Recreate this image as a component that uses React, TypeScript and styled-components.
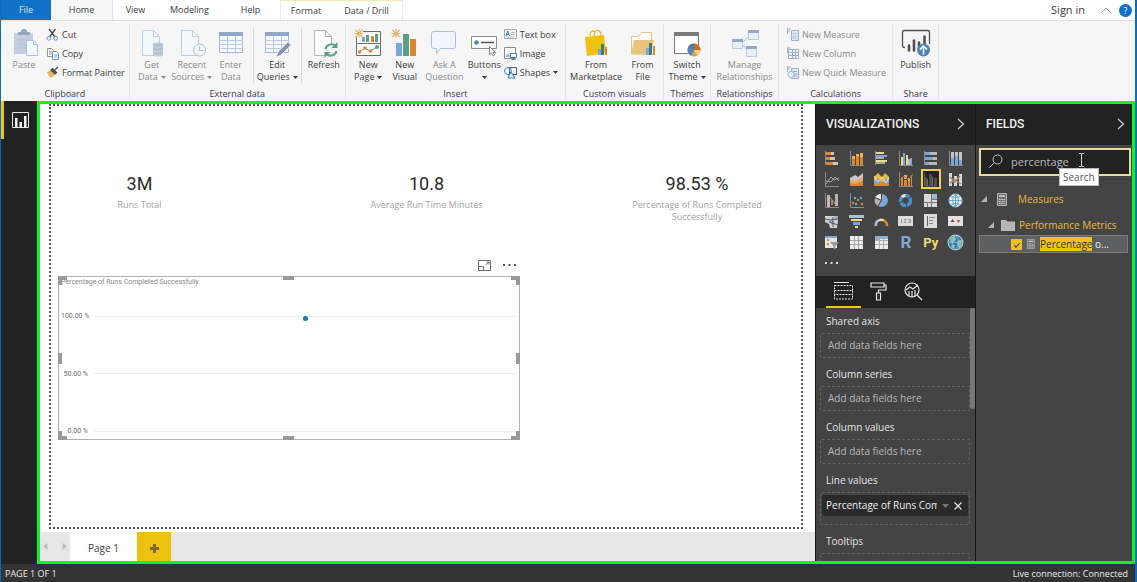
import React from "react";
import styled, { createGlobalStyle, css } from "styled-components";

const c = {
  blue: "#0a6cbd",
  dark: "#222222",
  pane: "#444444",
  yellow: "#efc319",
  orange: "#d9882f",
  sky: "#7ba7d7",
  cream: "#f0d98a",
  light: "#e4e4e4",
  grey: "#9a9a9a",
  green: "#00fb20",
};

const Global = createGlobalStyle`
  *, *::before, *::after { box-sizing: border-box; }
  body { margin: 0; font-family: "Open Sans", "Noto Sans", sans-serif; font-size: 9px; color: #3c3c3c; }
  button, input { font: inherit; color: inherit; margin: 0; padding: 0; border: 0; background: none; }
  svg { display: block; flex: none; }
  ul { list-style: none; margin: 0; padding: 0; }
  h2, p { margin: 0; font-weight: 400; }
`;

const Shell = styled.div`
  display: flex;
  flex-direction: column;
  height: 100vh;
  border-left: 1px solid ${c.blue};
  border-right: 2px solid ${c.blue};
  overflow: hidden;
  background: #fff;
`;

/* ---------- ribbon ---------- */

const TabBar = styled.nav`
  display: flex;
  flex: none;
  height: 20px;
  background: #fff;
`;

const Tab = styled.button<{ $w: number; $kind?: "file" | "active" | "context" }>`
  width: ${(p) => p.$w}px;
  line-height: 20px;
  text-align: center;
  ${(p) => p.$kind === "file" && css`background: #1272c8; color: #d3e6f7;`}
  ${(p) => p.$kind === "active" && css`background: #f6f6f6; border-right: 1px solid #e2e2e2;`}
`;

const ContextTabs = styled.div`
  display: flex;
  line-height: 18px;
  border: 1px solid #ececec;
  border-bottom: 0;
  border-top: 1px solid #f1ecb0;
  button { line-height: 18px; }
`;

const Account = styled.div`
  display: flex;
  align-items: center;
  gap: 16px;
  margin-left: auto;
  padding-right: 3px;
`;

const SignIn = styled.button`
  font-size: 11px;
  line-height: 20px;
`;

const AccountIcons = styled.div`
  display: flex;
  align-items: center;
  gap: 8px;
`;

const HelpButton = styled.button`
  width: 13px;
  height: 13px;
  border-radius: 50%;
  background: #0f6fc6;
  color: #fff;
  font-size: 9px;
  line-height: 13px;
  text-align: center;
`;

const Ribbon = styled.div`
  display: flex;
  flex: none;
  height: 81px;
  background: #f6f6f6;
  border-top: 1px solid #e2e2e2;
`;

const Group = styled.section`
  display: flex;
  flex-direction: column;
  justify-content: space-between;
  border-right: 1px solid #e6e6e6;
  margin: 3px 0 1px;
  padding: 0 2px;
`;

const GroupItems = styled.div`
  display: flex;
  padding-top: 1px;
`;

const GroupLabel = styled.h2`
  font-size: 9px;
  line-height: 12px;
  text-align: center;
`;

const Big = styled.button<{ $w: number; $off?: boolean }>`
  display: flex;
  flex-direction: column;
  align-items: center;
  width: ${(p) => p.$w}px;
  padding-top: 3px;
  line-height: 12px;
  white-space: nowrap;
  color: ${(p) => (p.$off ? "#8b8b8b" : "#3c3c3c")};
  svg.pic { margin-bottom: 1px; }
`;

const Line = styled.span`
  display: flex;
  align-items: center;
  gap: 3px;
  height: 12px;
`;

const Small = styled.button<{ $off?: boolean }>`
  display: flex;
  align-items: center;
  gap: 3px;
  height: 19px;
  white-space: nowrap;
  color: ${(p) => (p.$off ? "#8b8b8b" : "#3c3c3c")};
`;

const SmallColumn = styled.div<{ $pad?: string }>`
  display: flex;
  flex-direction: column;
  padding: ${(p) => p.$pad || "0 5px 0 4px"};
`;

const Rule = styled.i`
  width: 1px;
  margin: 2px 3px 0;
  background: #dadada;
`;

const Caret = () => (
  <svg width="5" height="3" viewBox="0 0 5 3"><path d="M0 0h5L2.500 3z" fill="currentColor" /></svg>
);

const Pic = ({ children }: { children: React.ReactNode }) => (
  <svg className="pic" width="30" height="30" viewBox="0 0 30 30" fill="none">{children}</svg>
);

type BigProps = { w: number; off?: boolean; lines: string[]; caret?: boolean; children: React.ReactNode };
const BigButton = ({ w, off, lines, caret, children }: BigProps) => (
  <Big $w={w} $off={off}>
    <Pic>{children}</Pic>
    {lines.map((l, i) => (
      <Line key={i}>{l}{caret && i === lines.length - 1 && <Caret />}</Line>
    ))}
  </Big>
);

const S = ({ children }: { children: React.ReactNode }) => (
  <svg width="13" height="13" viewBox="0 0 13 13" fill="none">{children}</svg>
);

const Doc = () => <path d="M7.500 2.500h11l6 6v19h-17zM18.500 2.500v6h6" fill="#f3f8fd" stroke="#bccfe4" />;
const Spark = () => <path d="M6 1v9M1.500 5.500h9M2.500 2l7 7M9.500 2l-7 7" stroke="#eab065" strokeWidth="1.100" />;
const GridPic = () => (
  <>
    <path d="M3.500 4.500h23v20h-23z" fill="#f5f9fd" stroke="#a3b6d0" />
    <path d="M3 4h24v4H3z" fill="#92a7c6" />
    <path d="M3 12.500h24M3 16.500h24M3 20.500h24M11.500 8v16M19.500 8v16" stroke="#bccbe0" />
  </>
);

const RibbonBar = () => (
  <Ribbon>
    <Group>
      <GroupItems>
        <BigButton w={42} off lines={["Paste"]}>
          <path d="M5 5h19v21H5z" fill="#c5cede" />
          <path d="M9 7V4h3a3 3 0 0 1 6 0h3v3z" fill="#93a6bd" />
          <path d="M8 12h12M8 16h9M8 20h9" stroke="#b3bfd2" />
          <path d="M17.500 12.500h7l4 4v11h-11zM24.500 12.500v4h4" fill="#f4f9fe" stroke="#a9c2df" />
        </BigButton>
        <SmallColumn $pad="0 2px 0 1px">
          <Small>
            <S>
              <path d="M3 1l6 8M9.500 1l-6 8" stroke="#4a4a4a" strokeWidth="1.300" />
              <circle cx="2.800" cy="10.300" r="1.900" stroke="#5c93c8" /><circle cx="9.600" cy="10.300" r="1.900" stroke="#5c93c8" />
            </S>
            Cut
          </Small>
          <Small>
            <S>
              <path d="M1.500 1.500h4l2 2v6h-6z" fill="#fff" stroke="#8794a5" /><path d="M3 5h3M3 7h3" stroke="#8794a5" />
              <path d="M6.500 4.500h4l2 2v6h-6z" fill="#fff" stroke="#8794a5" /><path d="M8 8h3M8 10h3" stroke="#6f9fcf" />
            </S>
            Copy
          </Small>
          <Small>
            <S>
              <path d="M1 6l4-2 4 4-3 4c-1 0-5-4-5-6z" fill="#e8b65c" />
              <path d="M5 4l4 4 1.500-1.500-4-4zM9 4l3-3" stroke="#505050" fill="#505050" strokeWidth="1.200" />
            </S>
            Format Painter
          </Small>
        </SmallColumn>
      </GroupItems>
      <GroupLabel>Clipboard</GroupLabel>
    </Group>

    <Group>
      <GroupItems>
        <BigButton w={40} off lines={["Get", "Data"]} caret>
          <g transform="translate(-2 0)"><Doc />
            <path d="M18 16c0-2 10-2 10 0v11c0 2-10 2-10 0z" fill="#c0cbdc" />
            <path d="M18 16c0 2 10 2 10 0M18 20c0 2 10 2 10 0M18 24c0 2 10 2 10 0" stroke="#a5b4ca" />
          </g>
        </BigButton>
        <BigButton w={40} off lines={["Recent", "Sources"]} caret>
          <g transform="translate(-3 0)"><Doc /></g>
          <circle cx="22.500" cy="22" r="6" fill="#f3f8fd" stroke="#a9bdd8" />
          <path d="M22.500 18v4.500h4" stroke="#a9bdd8" />
        </BigButton>
        <BigButton w={38} off lines={["Enter", "Data"]}><GridPic /></BigButton>
        <Rule />
        <BigButton w={41} lines={["Edit", "Queries"]} caret>
          <GridPic />
          <path d="M14 29l2-5L26 14l3 3-10 10z" fill="#8793a8" stroke="#f6f6f6" strokeWidth="0.600" />
        </BigButton>
        <Rule />
        <BigButton w={38} lines={["Refresh"]}>
          <g transform="translate(-2 0)"><path d="M7.500 2.500h11l6 6v19h-17zM18.500 2.500v6h6" fill="#fff" stroke="#b5b5b5" /></g>
          <circle cx="22" cy="22" r="7.500" fill="#f6f6f6" />
          <path d="M16.500 21a6 6 0 0 1 10-3M27.500 23a6 6 0 0 1-10 3" stroke="#57a184" strokeWidth="2" />
          <path d="M28.500 14v6h-6zM15.500 30v-6h6z" fill="#57a184" />
        </BigButton>
      </GroupItems>
      <GroupLabel>External data</GroupLabel>
    </Group>

    <Group>
      <GroupItems>
        <BigButton w={41} lines={["New", "Page"]} caret>
          <path d="M3.500 3.500h24v24h-24zM3 15.500h24" fill="#fff" stroke="#6b6b6b" />
          <path d="M9 9h3v5H9z" fill="#7ba7d7" /><path d="M13 7h3v7h-3z" fill="#57a184" /><path d="M18 8h3v6h-3z" fill="#d9882f" /><path d="M22 6h3v8h-3z" fill="#57a184" />
          <path d="M6 24l6-4 5 3 7-4" stroke="#8a8a8a" />
          <circle cx="6.500" cy="24" r="1.800" fill="#d9882f" /><circle cx="12" cy="20" r="1.800" fill="#d9882f" /><circle cx="17.500" cy="23" r="1.800" fill="#d9882f" /><circle cx="24" cy="19" r="2" fill="#57a184" />
          <path d="M0 0h10v9H0z" fill="#f6f6f6" /><Spark />
        </BigButton>
        <BigButton w={32} lines={["New", "Visual"]}>
          <path d="M6 15h6v13H6z" fill="#7ba7d7" /><path d="M13 6h6v22h-6z" fill="#57a184" /><path d="M20 11h6v17h-6z" fill="#d9882f" /><Spark />
        </BigButton>
        <BigButton w={47} off lines={["Ask A", "Question"]}>
          <path d="M2.500 5.500q0-2 2-2h20q2 0 2 2v13q0 2-2 2h-13l-4 5v-5h-3q-2 0-2-2z" fill="#f1f6fd" stroke="#a9bfe0" />
        </BigButton>
        <Big $w={33}>
          <Pic>
            <path d="M2.500 8.500h25v12h-25z" fill="#fff" stroke="#909090" />
            <circle cx="7.500" cy="14.500" r="2.300" fill="#4a86c4" /><path d="M12 14.500h13" stroke="#505050" strokeWidth="1.500" />
            <path d="M20.500 18.500v8l2-1.500 1.500 3 1.500-1-1.500-2.500h2.500z" fill="#fff" stroke="#777" strokeWidth="0.800" />
          </Pic>
          <Line>Buttons</Line>
          <Line><Caret /></Line>
        </Big>
        <SmallColumn $pad="0 5px 0 3px">
          <Small>
            <S><path d="M0.500 1.500h12v9h-12z" fill="#fff" stroke="#a9a9a9" /><path d="M2 8l1.700-5L5.500 8M2.500 6.500h2.500" stroke="#2d77c0" /><path d="M7 4.500h4M7 6.500h4M2 9h9" stroke="#b5b5b5" /></S>
            Text box
          </Small>
          <Small>
            <S><path d="M0.500 0.500h11v11h-11z" fill="#fff" stroke="#8a8a8a" /><path d="M1 10l3-4 3 4z" fill="#9cb6d2" /><path d="M6.500 6.500h6v4h-6z" fill="#fff" stroke="#3b7fc0" /><path d="M9.500 10v2.500M7.500 12.500h4" stroke="#3b7fc0" /></S>
            Image
          </Small>
          <Small>
            <S><circle cx="4" cy="5" r="3.500" stroke="#3b7fc0" /><path d="M5.500 1.500h7v7h-7z" stroke="#2f67a3" /><path d="M4 12l3-6 4 6z" fill="#dceaf7" stroke="#3b7fc0" /></S>
            Shapes<Caret />
          </Small>
        </SmallColumn>
      </GroupItems>
      <GroupLabel>Insert</GroupLabel>
    </Group>

    <Group>
      <GroupItems>
        <BigButton w={56} lines={["From", "Marketplace"]}>
          <path d="M9 8c0-6 4-6 5-3M13 8c0-8 7-7 7 0" stroke="#e3b72c" strokeWidth="1.200" />
          <path d="M4 9l19-2 2 18-19 3z" fill="#f0c10f" />
          <path d="M17 21h3v6h-3z" fill="#7ba7d7" /><path d="M20 16h3v11h-3z" fill="#3f7f7b" /><path d="M24 19h2v8h-2z" fill="#d9882f" />
        </BigButton>
        <BigButton w={37} lines={["From", "File"]}>
          <path d="M3.500 26V8.500h7l3-4h10v22z" fill="#fff" stroke="#e0c48b" />
          <path d="M6 12h20l-3 14H3z" fill="#e8c57c" />
          <path d="M18 20h3v7h-3z" fill="#7ba7d7" /><path d="M21 15h3v12h-3z" fill="#3f7f7b" /><path d="M25 18h2v9h-2z" fill="#d9882f" />
        </BigButton>
      </GroupItems>
      <GroupLabel>Custom visuals</GroupLabel>
    </Group>

    <Group>
      <GroupItems>
        <BigButton w={42} lines={["Switch", "Theme"]} caret>
          <path d="M2.500 4.500h24v21h-24z" fill="#fff" stroke="#7a7a7a" /><path d="M2 4h25v4H2z" fill="#7a7a7a" />
          <circle cx="22" cy="22" r="6.500" fill="#e2a04c" /><path d="M22 22V15.500A6.500 6.500 0 0 1 28.500 22z" fill="#c96f24" />
          <path d="M22 22h6.500a6.500 6.500 0 0 1-3 5.500z" fill="#f0cd92" /><path d="M22 22l-5.600-3.400A6.500 6.500 0 0 0 19 27.700z" fill="#4a86c4" /><path d="M22 22V15.500a6.500 6.500 0 0 0-5.600 3.100z" fill="#4e7d9c" />
        </BigButton>
      </GroupItems>
      <GroupLabel>Themes</GroupLabel>
    </Group>

    <Group>
      <GroupItems>
        <BigButton w={63} off lines={["Manage", "Relationships"]}>
          <path d="M12 15l7-7M12 16l5 6" stroke="#a9bfe0" />
          <path d="M18.500 2.500h10v9h-10zM2.500 11.500h10v9h-10zM16.500 18.500h10v10h-10z" fill="#e6effa" stroke="#b7cae4" />
          <path d="M18 2h11v3H18zM2 11h11v3H2zM16 18h11v3H16z" fill="#93a9cb" />
        </BigButton>
      </GroupItems>
      <GroupLabel>Relationships</GroupLabel>
    </Group>

    <Group>
      <GroupItems>
        <SmallColumn $pad="0 4px 0 5px">
          {["New Measure", "New Column", "New Quick Measure"].map((t, i) => (
            <Small key={t} $off>
              <S>
                <path d="M1 1h4M1 3h3M1.500 0v6" stroke="#a9b3c0" />
                {i === 1
                  ? <><path d="M2.500 2.500h10v9h-10z" fill="#eef4fb" stroke="#9fb2cc" /><path d="M2 5.500h11M6.500 3v9M9.500 3v9M2 8.500h11" stroke="#9fb2cc" /></>
                  : <><path d="M5.500 2.500h7v10h-7z" fill="#dde8f5" stroke="#9fb2cc" /><path d="M7 5.500h4M7 8h4M7 10h4" stroke="#8ea5c5" strokeDasharray={i ? "none" : "1 1"} />{i === 2 && <circle cx="5" cy="8.500" r="3" fill="#eef4fb" stroke="#9fb2cc" />}</>}
              </S>
              {t}
            </Small>
          ))}
        </SmallColumn>
      </GroupItems>
      <GroupLabel>Calculations</GroupLabel>
    </Group>

    <Group>
      <GroupItems>
        <BigButton w={41} lines={["Publish"]}>
          <path d="M4 19.500h-.5q-2 0-2-2V4.500q0-2 2-2h23q2 0 2 2V16" stroke="#505050" strokeWidth="1.300" />
          <path d="M8 17.500v5M13 12.500v10M18 14.500v4M23.500 8.500v7" stroke="#505050" strokeWidth="2.600" strokeLinecap="round" />
          <circle cx="22.500" cy="22" r="6.500" fill="#4a83b8" /><path d="M22.500 26.500v-8M19 21.500l3.500-3.500 3.500 3.500" stroke="#fff" strokeWidth="1.600" />
        </BigButton>
      </GroupItems>
      <GroupLabel>Share</GroupLabel>
    </Group>
  </Ribbon>
);

/* ---------- workspace ---------- */

const Workspace = styled.div`
  display: flex;
  flex: 1;
  min-height: 0;
`;

const Rail = styled.aside`
  width: 36px;
  background: ${c.dark};
`;

const RailButton = styled.button`
  display: flex;
  align-items: center;
  justify-content: center;
  width: 100%;
  height: 38px;
  border-left: 3px solid ${c.yellow};
`;

const Frame = styled.main`
  display: flex;
  flex: 1;
  min-width: 0;
  border: 3px solid ${c.green};
`;

const Report = styled.section`
  display: flex;
  flex-direction: column;
  flex: 1;
  min-width: 0;
`;

const Page = styled.div`
  flex: 1;
  min-height: 0;
  margin: 0 12px 3px 9px;
  border: 2px dotted #555;
`;

const Kpis = styled.div`
  display: grid;
  grid-template-columns: 177fr 397fr 144fr;
  padding: 67px 32px 0 0;
  min-height: 150px;
  text-align: center;
`;

const KpiValue = styled.p`
  font-family: Roboto, "Liberation Sans", sans-serif;
  font-size: 18px;
  line-height: 22px;
  color: #2b2b2b;
`;

const KpiLabel = styled.p`
  margin-top: 4px;
  line-height: 12px;
  color: #a3a3a3;
`;

const ChartArea = styled.div`
  width: 62.5%;
  padding-left: 7px;
`;

const ChartTools = styled.div`
  display: flex;
  justify-content: flex-end;
  align-items: center;
  gap: 12px;
  height: 20px;
  padding: 0 4px 2px 0;
`;

const Chart = styled.figure`
  position: relative;
  display: flex;
  flex-direction: column;
  height: 164px;
  margin: 0;
  padding: 0 2px 3px;
  border: 1px solid #b0b0b0;
  font-family: Roboto, "Liberation Sans", sans-serif;
  font-size: 7px;
`;

const ChartTitle = styled.figcaption`
  line-height: 10px;
  color: #8b8b8b;
`;

const Plot = styled.div`
  position: relative;
  display: flex;
  flex: 1;
  flex-direction: column;
  justify-content: space-between;
  padding-top: 24px;
`;

const Tick = styled.div`
  display: flex;
  align-items: center;
  gap: 6px;
  height: 10px;
  color: #6b6b6b;
  span { width: 27px; text-align: right; white-space: nowrap; }
  &::after { content: ""; flex: 1; height: 1px; background: #ececec; }
`;

const Point = styled.i`
  position: absolute;
  top: 29px;
  left: 53%;
  width: 5px;
  height: 5px;
  border-radius: 50%;
  background: #1b78ba;
`;

const Handle = styled.i<{ $at: string }>`
  position: absolute;
  background: #999;
  ${(p) => p.$at.includes("t") && css`top: -1px;`}
  ${(p) => p.$at.includes("b") && css`bottom: -1px;`}
  ${(p) => p.$at.includes("l") && css`left: -1px;`}
  ${(p) => p.$at.includes("r") && css`right: -1px;`}
  ${(p) => p.$at.length === 2 && css`
    width: 9px;
    height: 9px;
    background: none;
    border: 0 solid #999;
    border-${p.$at[0] === "t" ? "top" : "bottom"}-width: 4px;
    border-${p.$at[1] === "l" ? "left" : "right"}-width: 4px;
  `}
  ${(p) => "tb".includes(p.$at) && css`left: 50%; width: 11px; height: 4px; margin-left: -6px;`}
  ${(p) => "lr".includes(p.$at) && css`top: 50%; width: 4px; height: 11px; margin-top: -5px;`}
`;

const PageTabs = styled.div`
  display: flex;
  flex: none;
  height: 29px;
  background: #e7e7e7;
`;

const PageArrows = styled.div`
  display: flex;
  align-items: center;
  justify-content: space-between;
  width: 30px;
  padding: 0 3px;
`;

const PageTab = styled.button`
  width: 67px;
  padding-top: 2px;
  background: #fff;
  font-size: 10px;
`;

const AddPage = styled.button`
  display: flex;
  align-items: center;
  justify-content: center;
  width: 34px;
  padding-top: 4px;
  background: #ecc110;
`;

/* ---------- panes ---------- */

const Pane = styled.aside<{ $w: number }>`
  display: flex;
  flex-direction: column;
  flex: none;
  width: ${(p) => p.$w}px;
  border-left: 1px solid #151515;
  background: ${c.pane};
  color: ${c.light};
  font-size: 10px;
`;

const PaneHead = styled.header<{ $end: number }>`
  display: flex;
  flex: none;
  align-items: center;
  justify-content: space-between;
  height: 41px;
  padding: 0 ${(p) => p.$end}px 2px 10px;
  background: ${c.dark};
  h2 { font: 500 12px Roboto, "Liberation Sans", sans-serif; color: #f2f2f2; }
`;

const Gallery = styled.div`
  display: grid;
  grid-template-columns: repeat(6, 1fr);
  grid-auto-rows: 21px;
  flex: none;
  height: 131px;
  padding: 3px 7px 0 3px;
`;

const VizButton = styled.button<{ $on?: boolean }>`
  display: flex;
  align-items: center;
  justify-content: center;
  justify-self: center;
  width: 20px;
  height: 20px;
  ${(p) => p.$on && css`background: ${c.dark}; border: 2px solid #f2d24c;`}
`;

const PaneTabs = styled.div`
  display: flex;
  flex: none;
  height: 32px;
  padding: 0 10px;
  background: ${c.dark};
`;

const PaneTab = styled.button<{ $on?: boolean }>`
  display: flex;
  align-items: center;
  justify-content: center;
  width: 35px;
  border-bottom: 2px solid ${(p) => (p.$on ? c.yellow : "transparent")};
`;

const Wells = styled.div`
  display: flex;
  flex: 1;
  min-height: 0;
  overflow: hidden;
`;

const WellList = styled.div`
  flex: 1;
  min-width: 0;
  padding: 5px 0 0 4px;
`;

const Track = styled.i`
  width: 5px;
  height: 101px;
  border-radius: 2px;
  background: #777;
`;

const WellName = styled.h2`
  padding-left: 6px;
  font-size: 10px;
  line-height: 16px;
`;

const Well = styled.div<{ $filled?: boolean }>`
  margin: 4px 0 8px;
  min-height: ${(p) => (p.$filled ? 33 : 25)}px;
  padding: ${(p) => (p.$filled ? "2px 1px" : "0 7px")};
  border: 1px dashed #646464;
  border-radius: 2px;
  line-height: 23px;
  color: #b8b8b8;
`;

const Chip = styled.div`
  display: flex;
  align-items: center;
  gap: 5px;
  height: 21px;
  padding: 0 6px 0 4px;
  border-radius: 2px;
  background: #2a2a2a;
  color: #efefef;
  span { flex: 1; overflow: hidden; white-space: nowrap; }
`;

const SearchBox = styled.div`
  position: relative;
  display: flex;
  align-items: center;
  gap: 8px;
  height: 28px;
  margin: 3px 1px 3px 3px;
  padding: 0 8px 2px;
  border: 2px solid #e9dca0;
  background: ${c.dark};
  input { flex: 1; min-width: 0; outline: 0; font-size: 11px; color: #b9b9b9; }
`;

const Tip = styled.span`
  position: absolute;
  top: 18px;
  left: 78px;
  padding: 0 3px;
  border: 1px solid #bbb;
  background: #fff;
  color: #555;
  font-size: 10px;
  line-height: 16px;
`;

const Pointer = styled.svg`
  position: absolute;
  top: 3px;
  left: 97px;
`;

const Tree = styled.ul`
  flex: 1;
  border-top: 1px solid #3a3a3a;
  padding: 3px 4px 0 3px;
`;

const Node = styled.li<{ $depth: number }>`
  display: flex;
  align-items: center;
  height: ${(p) => (p.$depth ? 20 : 32)}px;
  padding-left: ${(p) => 2 + p.$depth * 7}px;
  color: #edb935;
`;

const NodeIcon = styled.span<{ $left: number; $right: number }>`
  margin: 0 ${(p) => p.$right}px 0 ${(p) => p.$left}px;
`;

const FieldRow = styled.label`
  display: flex;
  align-items: center;
  gap: 5px;
  height: 18px;
  padding-left: 31px;
  border: 1px solid #7b7b7b;
  background: #5d5f60;
  color: #f2f2f2;
  white-space: nowrap;
  input {
    display: flex;
    align-items: center;
    justify-content: center;
    appearance: none;
    width: 11px;
    height: 11px;
    background: ${c.yellow};
  }
  input::after {
    content: "";
    width: 6px;
    height: 3px;
    border-left: 1px solid #333;
    border-bottom: 1px solid #333;
    transform: rotate(-45deg);
  }
  mark { background: #efc40c; color: #333; }
`;

const Status = styled.footer`
  display: flex;
  flex: none;
  align-items: center;
  justify-content: space-between;
  height: 18px;
  padding: 0 7px 0 4px;
  background: #333;
  color: #ececec;
`;

const Chevron = () => <svg width="8" height="12" viewBox="0 0 8 12"><path d="M1 1l5.500 5L1 11" fill="none" stroke="#d0d0d0" strokeWidth="1.200" /></svg>;
const Expander = () => <svg width="6" height="6" viewBox="0 0 6 6"><path d="M6 0v6H0z" fill="#b5b5b5" /></svg>;
const Calc = ({ w, h }: { w: number; h: number }) => (
  <svg width={w} height={h} viewBox="0 0 10 13"><path d="M0.500 0.500h9v12h-9z" fill="#6f6f6f" stroke="#b5b5b5" /><path d="M2 3h6" stroke="#d5d5d5" strokeWidth="1.500" /><path d="M2 6.500h6M2 8.500h6M2 10.500h6" stroke="#d5d5d5" strokeDasharray="1.500 .7" /></svg>
);

const F = ({ d, f }: { d: string; f: string }) => <path d={d} fill={f} />;
const L = ({ d, s, w = 1 }: { d: string; s: string; w?: number }) => <path d={d} stroke={s} strokeWidth={w} fill="none" />;
const Axis = () => <L d="M1.500 0v14.500H15" s="#8c8c8c" />;
const World = ({ fill }: { fill: string }) => <circle cx="7.500" cy="7.500" r="6.500" fill={fill} stroke="#a9cbe4" />;

const visuals: [string, React.ReactNode][] = [
  ["Stacked bar chart", <><L d="M1.500 0v14" s="#8c8c8c" /><F d="M2 1h5v3H2zM2 6h4v3H2zM2 11h7v3H2z" f={c.orange} /><F d="M7 1h3v3H7zM6 6h5v3H6zM9 11h5v3H9z" f="#d5c3ab" /></>],
  ["Stacked column chart", <><Axis /><F d="M3 8h3v6H3zM7 5h3v9H7zM11 6h3v8h-3z" f={c.orange} /><F d="M3 5h3v3H3zM11 2h3v4h-3zM7 3h3v2H7z" f="#eeb24f" /></>],
  ["Clustered bar chart", <><L d="M1.500 0v14" s="#8c8c8c" /><F d="M2 1h8v2H2zM2 9h11v2H2z" f={c.cream} /><F d="M2 4h11v2H2z" f={c.sky} /><F d="M2 6h8v2H2zM2 11h9v2H2z" f="#aaa" /></>],
  ["Clustered column chart", <><Axis /><F d="M3 6h2v8H3zM8 4h2v10H8z" f={c.cream} /><F d="M5 2h2v12H5zM12 7h2v7h-2z" f={c.sky} /><F d="M10 8h2v6h-2z" f="#bbb" /></>],
  ["100% stacked bar chart", <><L d="M1.500 0v14" s="#8c8c8c" /><F d="M2 1h5v3H2zM2 6h8v3H2zM2 11h4v3H2z" f={c.sky} /><F d="M7 1h7v3H7zM10 6h4v3h-4zM6 11h8v3H6z" f="#b9b9b9" /></>],
  ["100% stacked column chart", <><Axis /><F d="M3 1h3v7H3zM7 1h3v4H7zM11 1h3v9h-3z" f="#c5c5c5" /><F d="M3 7h3v7H3zM7 5h3v9H7zM11 9h3v5h-3z" f={c.sky} /></>],
  ["Line chart", <><Axis /><L d="M2 12l5-7 3 3 5-2M2 9l5 1 4-5 4 4" s="#a5a5a5" /></>],
  ["Area chart", <><F d="M1 6l5-3 3 2 5-4v13H1z" f="#c9c9c9" /><F d="M1 7l5 2 8-4v9H1z" f="#e8a868" /><F d="M1 11l5 1 8-3v5H1z" f={c.orange} /></>],
  ["Stacked area chart", <><F d="M0 14V5l4-4 4 4 3-4 4 4v9z" f="#e9b83e" /><F d="M0 14V9l4-3 4 5 4-5 3 3v5z" f={c.sky} /><L d="M0 4l4 6 4-5 4 6 3-6" s="#f0dfb2" /><F d="M0 14v-3l4 1 4-2 4 2 3-1v3z" f={c.orange} /></>],
  ["Line and stacked column chart", <><Axis /><F d="M3 5h2v9H3zM6 8h3v6H6zM10 9h2v5h-2zM13 3h1v11h-1z" f={c.orange} /><F d="M6 3h3v4H6zM10 6h2v3h-2z" f="#eeb24f" /><L d="M2 8l4-4 4 4 5-6" s="#b57b54" /></>],
  ["Line and clustered column chart", <><L d="M1.500 1v13H14" s="#5f5f5f" /><F d="M2 5h2v9H2zM6 2h3v12H6zM11 6h3v8h-3z" f="#505050" /><F d="M4 7h1v7H4zM9 5h1v9H9z" f="#737373" /></>],
  ["Ribbon chart", <><F d="M1 1h3v13H1zM6 4h3v10H6zM11 2h3v12h-3z" f="#d9d9d9" /><L d="M2 5l5 5 5-6M2 11l5-3 6 4" s="#a58b74" w={1.5} /></>],
  ["Waterfall chart", <><Axis /><F d="M3 2h3v12H3z" f="#bcbcbc" /><F d="M7 7h2v5H7z" f="#d76d55" /><F d="M11 1h3v12h-3z" f="#b5b5b5" /><L d="M5 3l7 9" s="#8fb0a3" /></>],
  ["Scatter chart", <><Axis /><g fill={c.orange}><circle cx="4" cy="10" r="1.200" /><circle cx="9" cy="7" r="1.200" /><circle cx="13" cy="11" r="1.200" /></g><g fill={c.sky}><circle cx="6" cy="5" r="1.200" /><circle cx="12" cy="5" r="1.200" /><circle cx="7" cy="11" r="1.200" /></g></>],
  ["Pie chart", <><circle cx="7.500" cy="7.500" r="6.500" fill={c.sky} /><F d="M7 7L1 4.500A6.500 6.500 0 0 1 7 1z" f="#ece9e4" /><F d="M7 8l-6-2.500A6.500 6.500 0 0 0 4 13z" f="#c4ab9c" /><L d="M7.500 7.500V1M7.500 7.500l-6-3M7.500 7.500l-4 6" s="#444" /></>],
  ["Donut chart", <><circle cx="7.500" cy="7.500" r="5" fill="none" stroke="#4b91c9" strokeWidth="3.500" strokeDasharray="6 1" /><L d="M4 4A5 5 0 0 1 7.500 2.500" s="#e5e5e5" w={3} /></>],
  ["Treemap", <><F d="M1 1h13v13H1z" f="#dadada" /><F d="M9 1h5v5H9z" f="#9bb7d2" /><L d="M1 9.500h13M8.500 1v13M9 6.500h5M4.500 10v4" s="#777" /></>],
  ["Map", <><World fill="#e2ecf2" /><L d="M1 7.500h13M7.500 1v13M3 3.500q4.500 2.500 9 0M3 11.500q4.500-2.500 9 0M7.500 1q-6 6.500 0 13q6-6.500 0-13" s="#5a9db9" w={0.8} /></>],
  ["Filled map", <><F d="M1 2h13v5l-1 7H6L5 10 1 8z" f="#cfcfcf" /><F d="M6 6l3 1v3l-3-1zM10 3l4-1-1 4z" f={c.sky} /><L d="M1 5l5 1 8-1M5 8l9 3M9 3v10" s="#555" /></>],
  ["Funnel", <><F d="M0 1h15v3H0z" f="#a9c4e0" /><F d="M2 5h11v2H2z" f={c.cream} /><F d="M4 8h7v3H4z" f={c.sky} /><F d="M6 12h3v2H6z" f={c.cream} /></>],
  ["Gauge", <><L d="M2 12A5.500 5.500 0 0 1 5 6" s="#a9c4e0" w={2.5} /><L d="M5 6.500a5.500 5.500 0 0 1 5 0" s={c.cream} w={2.5} /><L d="M10 6.500a5.500 5.500 0 0 1 3 5.500" s={c.orange} w={2.5} /></>],
  ["Card", <><F d="M0 2h15v10H0z" f="#dcdcdc" /><L d="M3.500 5v4M6 5.500h2.500L6 8.500h2.500M10.500 5.500h2v3h-2M10.500 7h2" s="#8a8a8a" w={0.8} /></>],
  ["Multi-row card", <><F d="M1 0h13v14H1z" f="#dcdcdc" /><L d="M4.500 2v10" s="#666" /><L d="M6 3.500h6M6 6.500h4M6 9.500h4" s="#888" /></>],
  ["KPI", <><F d="M0 2h15v10H0z" f="#e2e2e2" /><F d="M2.500 8l2-3 2 3z" f="#555" /><F d="M8.500 6h4l-2 3z" f="#d25c4c" /></>],
  ["Slicer", <><F d="M1 1h12v12H1z" f="#e5e5e5" /><F d="M1 1h12v2H1z" f={c.sky} /><F d="M3 4h2v2H3zM3 8h2v2H3z" f={c.orange} /><F d="M6 7h9l-3.500 4v4l-2-1.500V11z" f="#9c9c9c" /></>],
  ["Table", <><F d="M1 1h13v13H1z" f="#ececec" /><L d="M1 5.500h13M1 9.500h13M5.500 1v13M9.500 1v13" s="#a5a5a5" /></>],
  ["Matrix", <><F d="M1 1h13v13H1z" f="#ececec" /><F d="M1 1h13v3H1zM1 1h4v4H1z" f="#8fb0d5" /><L d="M1 5.500h13M1 9.500h13M5.500 1v13M9.500 1v13" s="#acacac" /></>],
];

const TextIcon = styled.span<{ $c: string; $s: number }>`
  font: 700 ${(p) => p.$s}px Roboto, sans-serif;
  color: ${(p) => p.$c};
`;

const Visualizations = () => (
  <Pane $w={160}>
    <PaneHead $end={10}><h2>VISUALIZATIONS</h2><Chevron /></PaneHead>
    <Gallery>
      {visuals.map(([name, art]) => (
        <VizButton key={name} aria-label={name} $on={name === "Line and clustered column chart"}>
          <svg width="15" height="15" viewBox="0 0 15 15">{art}</svg>
        </VizButton>
      ))}
      <VizButton><TextIcon $c="#7ea8d6" $s={17}>R</TextIcon></VizButton>
      <VizButton><TextIcon $c="#f0dc6a" $s={13}>Py</TextIcon></VizButton>
      <VizButton aria-label="ArcGIS map">
        <svg width="17" height="17" viewBox="0 0 15 15"><World fill="#2f7fb5" /><F d="M3 3l4-1 1 3-3 3-2-1zM9 6l4-1v4l-2 4-2-3zM4 9l3 1-1 3-2-1z" f="#8cc4a0" /><L d="M1 7.500h13M7.500 1q-6 6.500 0 13q6-6.500 0-13" s="#8fb9d6" w={0.7} /></svg>
      </VizButton>
      <VizButton aria-label="More visuals">
        <svg width="13" height="3" viewBox="0 0 13 3" fill="#ddd"><path d="M0 0h2v2H0zM5.500 0h2v2h-2zM11 0h2v2h-2z" /></svg>
      </VizButton>
    </Gallery>
    <PaneTabs>
      <PaneTab $on aria-label="Fields">
        <svg width="19" height="18" viewBox="0 0 19 18" fill="none" stroke="#e8e8e8"><path d="M0 .5h15" /><path d="M.5 3.500h18v5H.5zM.5 8.500v4h18v-4M.5 12.500v4.500h18v-4.500" strokeDasharray="2 1" /></svg>
      </PaneTab>
      <PaneTab aria-label="Format">
        <svg width="17" height="19" viewBox="0 0 17 19" fill="none" stroke="#e8e8e8" strokeWidth="1.200"><path d="M1 1h13v4H1zM14 3h2v5H8.500v3M6.500 11h4v7h-4z" /></svg>
      </PaneTab>
      <PaneTab aria-label="Analytics">
        <svg width="19" height="19" viewBox="0 0 19 19" fill="none" stroke="#e8e8e8" strokeWidth="1.200"><circle cx="8" cy="8" r="7" /><path d="M13 13l5 5M2 8l4-3 3 2 5-4M5 9v5M8 9v6M11 8v6" /></svg>
      </PaneTab>
    </PaneTabs>
    <Wells>
      <WellList>
        {["Shared axis", "Column series", "Column values"].map((n) => (
          <React.Fragment key={n}><WellName>{n}</WellName><Well>Add data fields here</Well></React.Fragment>
        ))}
        <WellName>Line values</WellName>
        <Well $filled>
          <Chip>
            <span>Percentage of Runs Completed Successfully</span>
            <svg width="7" height="4" viewBox="0 0 7 4"><path d="M0 0h7L3.500 4z" fill="#777" /></svg>
            <svg width="8" height="8" viewBox="0 0 8 8"><path d="M.5.5l7 7M7.500.5l-7 7" stroke="#e8e8e8" strokeWidth="1.200" /></svg>
          </Chip>
        </Well>
        <WellName>Tooltips</WellName>
        <Well />
      </WellList>
      <Track />
    </Wells>
  </Pane>
);

const Fields = () => (
  <Pane $w={157}>
    <PaneHead $end={7}><h2>FIELDS</h2><Chevron /></PaneHead>
    <SearchBox>
      <svg width="14" height="14" viewBox="0 0 14 14" fill="none" stroke="#c5c5c5"><circle cx="8.500" cy="5.500" r="4.500" /><path d="M5 9l-4.500 4.500" /></svg>
      <input aria-label="Search" defaultValue="percentage" />
      <Tip>Search</Tip>
      <Pointer width="7" height="14" viewBox="0 0 7 14"><path d="M1 .5h2l.5.5.5-.5h2M3.500 1v12M1 13.500h2l.5-.5.5.5h2" fill="none" stroke="#d5d5d5" /></Pointer>
    </SearchBox>
    <Tree>
      <Node $depth={0}><Expander /><NodeIcon $left={10} $right={11}><Calc w={10} h={13} /></NodeIcon>Measures</Node>
      <Node $depth={1}>
        <Expander />
        <NodeIcon $left={7} $right={4}><svg width="14" height="12" viewBox="0 0 14 12"><path d="M0 1h5l1.500 1.500H14V12H0z" fill="#b5b5b5" /></svg></NodeIcon>
        Performance Metrics
      </Node>
      <li>
        <FieldRow><input type="checkbox" defaultChecked /><Calc w={8} h={10} /><span><mark>Percentage</mark> o...</span></FieldRow>
      </li>
    </Tree>
  </Pane>
);

const Kpi = ({ value, label }: { value: string; label: string }) => (
  <div><KpiValue>{value}</KpiValue><KpiLabel>{label}</KpiLabel></div>
);

export default function App() {
  return (
    <Shell>
      <Global />
      <TabBar>
        <Tab $w={50} $kind="file">File</Tab>
        <Tab $w={62} $kind="active">Home</Tab>
        <Tab $w={45}>View</Tab>
        <Tab $w={63}>Modeling</Tab>
        <Tab $w={59}>Help</Tab>
        <ContextTabs>
          <Tab $w={50}>Format</Tab>
          <Tab $w={71}>Data / Drill</Tab>
        </ContextTabs>
        <Account>
          <SignIn>Sign in</SignIn>
          <AccountIcons>
            <svg width="10" height="6" viewBox="0 0 10 6"><path d="M.5 5.500L5 1l4.500 4.500" fill="none" stroke="#999" /></svg>
            <HelpButton>?</HelpButton>
          </AccountIcons>
        </Account>
      </TabBar>
      <RibbonBar />
      <Workspace>
        <Rail>
          <RailButton aria-label="Report view">
            <svg width="17" height="16" viewBox="0 0 17 16"><path d="M.5.5h16v15H.5z" fill="none" stroke="#e5e5e5" /><path d="M3 6h2.500v9H3zM7.500 10H10v5H7.500zM12 4h2.500v11H12z" fill="#f2f2f2" /></svg>
          </RailButton>
        </Rail>
        <Frame>
          <Report>
            <Page>
              <Kpis>
                <Kpi value="3M" label="Runs Total" />
                <Kpi value="10.8" label="Average Run Time Minutes" />
                <Kpi value="98.53 %" label="Percentage of Runs Completed Successfully" />
              </Kpis>
              <ChartArea>
                <ChartTools>
                  <svg width="13" height="11" viewBox="0 0 13 11" fill="none" stroke="#6f6f6f"><path d="M.5.5h12v10H.5zM.5 6.500h5v4M7.500 5L11 2M8.500 2H11v2.500" /></svg>
                  <svg width="13" height="2" viewBox="0 0 13 2" fill="#555"><path d="M0 0h2v2H0zM5.500 0h2v2h-2zM11 0h2v2h-2z" /></svg>
                </ChartTools>
                <Chart>
                  <ChartTitle>Percentage of Runs Completed Successfully</ChartTitle>
                  <Plot>
                    <Tick><span>100.00 %</span></Tick>
                    <Tick><span>50.00 %</span></Tick>
                    <Tick><span>0.00 %</span></Tick>
                    <Point />
                  </Plot>
                  {["tl", "t", "tr", "r", "br", "b", "bl", "l"].map((at) => <Handle key={at} $at={at} />)}
                </Chart>
              </ChartArea>
            </Page>
            <PageTabs>
              <PageArrows>
                <button aria-label="Previous page"><svg width="5" height="7" viewBox="0 0 5 7"><path d="M4.500 0v7L0 3.500z" fill="#bdbdbd" /></svg></button>
                <button aria-label="Next page"><svg width="5" height="7" viewBox="0 0 5 7"><path d="M.5 0v7L5 3.500z" fill="#bdbdbd" /></svg></button>
              </PageArrows>
              <PageTab>Page 1</PageTab>
              <AddPage aria-label="Add page"><svg width="9" height="9" viewBox="0 0 9 9"><path d="M3 0h3v3h3v3H6v3H3V6H0V3h3z" fill="#7b6a2c" /></svg></AddPage>
            </PageTabs>
          </Report>
          <Visualizations />
          <Fields />
        </Frame>
      </Workspace>
      <Status><span>PAGE 1 OF 1</span><span>Live connection: Connected</span></Status>
    </Shell>
  );
}
